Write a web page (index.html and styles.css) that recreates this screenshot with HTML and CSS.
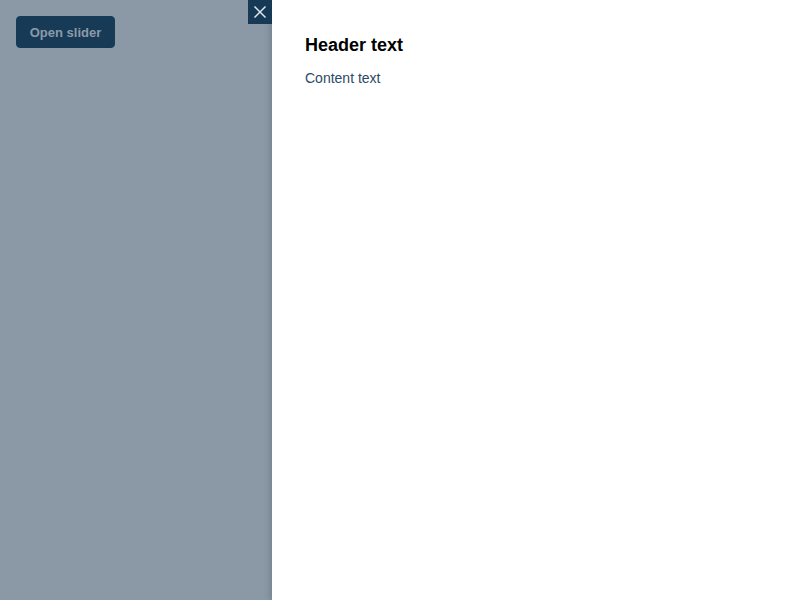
FILE: index.html
```html
<!DOCTYPE html>
<html>
<head>
<meta charset="utf-8">
<link rel="stylesheet" href="styles.css">
</head>
<body>
<div class="page">
  <button class="open-btn">Open slider</button>
</div>
<div class="overlay"></div>
<aside class="slider">
  <button class="close-btn" aria-label="Close">
    <svg width="14" height="14" viewBox="0 0 14 14"><path d="M1.5 1.5 L12.5 12.5 M12.5 1.5 L1.5 12.5" stroke="#dfe5ea" stroke-width="1.5" fill="none"/></svg>
  </button>
  <div class="slider-body">
    <h2 class="header">Header text</h2>
    <p class="content">Content text</p>
  </div>
</aside>
</body>
</html>
```
FILE: styles.css
```css
html, body {
  margin: 0;
  padding: 0;
  height: 100%;
  font-family: "Liberation Sans", Arial, sans-serif;
}
.page {
  padding: 16px;
  background: #ffffff;
  height: 100%;
  box-sizing: border-box;
}
.open-btn {
  position: relative;
  z-index: 2;
  font-family: "Liberation Sans", Arial, sans-serif;
  font-size: 13px;
  font-weight: 700;
  color: #8b9aa7;
  background: #173a56;
  border: 1px solid #173a56;
  border-radius: 4px;
  width: 99px;
  height: 32px;
  padding: 0;
}
.overlay {
  position: fixed;
  inset: 0;
  z-index: 1;
  background: #8a99a5;
}
.slider {
  position: fixed;
  top: 0;
  right: 0;
  bottom: 0;
  z-index: 3;
  width: 528px;
  background: #ffffff;
  box-shadow: -2px 0 6px rgba(40, 60, 80, 0.25);
}
.close-btn {
  position: absolute;
  top: 0;
  left: -24px;
  width: 24px;
  height: 24px;
  padding: 0;
  border: none;
  background: #163a56;
  display: flex;
  align-items: center;
  justify-content: center;
}
.slider-body {
  padding: 34px 32px 34px 33px;
}
.header {
  margin: 0;
  font-size: 18px;
  font-weight: 700;
  color: #000;
  line-height: 22px;
}
.content {
  margin: 13px 0 0;
  font-size: 14px;
  color: #2c4a67;
  line-height: 18px;
}
```
